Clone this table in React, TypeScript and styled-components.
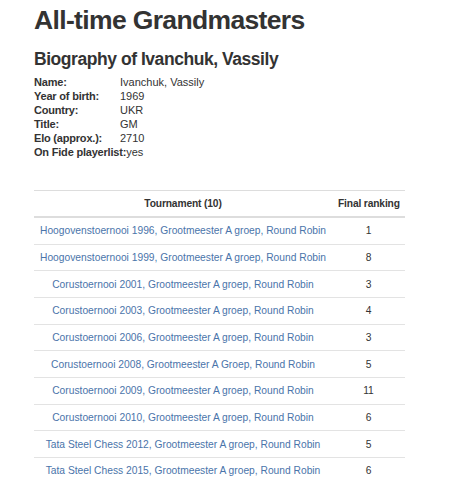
import React from 'react';
import styled, {createGlobalStyle} from 'styled-components';

const GlobalStyle = createGlobalStyle`
  body {
    margin: 0;
    background: #ffffff;
    font-family: 'Liberation Sans', Arial, sans-serif;
    color: #333333;
  }
`;

const Page = styled.div`
  padding: 4px 52px 0 34px;
`;

const Title = styled.h1`
  margin: 0;
  font-size: 26.5px;
  font-weight: bold;
  line-height: 32px;
  color: #333333;
  letter-spacing: -0.65px;
`;

const SubTitle = styled.h2`
  margin: 12px 0 0 0;
  font-size: 17.5px;
  font-weight: bold;
  line-height: 22px;
  color: #333333;
  letter-spacing: -0.45px;
`;

const InfoList = styled.div`
  margin-top: 5px;
  font-size: 11px;
  line-height: 14px;
`;

const InfoRow = styled.div`
  display: flex;
`;

const InfoLabel = styled.div`
  min-width: 86px;
  font-weight: bold;
  white-space: nowrap;
  letter-spacing: -0.2px;
`;

const InfoValue = styled.div``;

const Table = styled.table`
  width: 371px;
  margin-top: 31px;
  border-collapse: collapse;
  table-layout: fixed;
  font-size: 10.25px;
`;

const HeadCell = styled.th<{narrow?: boolean}>`
  border-top: 1px solid #dddddd;
  border-bottom: 2px solid #dddddd;
  padding: 0 6px;
  height: 25px;
  font-weight: bold;
  text-align: center;
  white-space: nowrap;
  letter-spacing: -0.15px;
  width: ${props => (props.narrow ? '61px' : 'auto')};
`;

const Cell = styled.td`
  border-top: 1px solid #e3e3e3;
  padding: 0 6px;
  height: 25.67px;
  text-align: center;
  white-space: nowrap;
`;

const Link = styled.a`
  color: #4a74aa;
  text-decoration: none;
`;

const info: [string, string][] = [
  ['Name:', 'Ivanchuk, Vassily'],
  ['Year of birth:', '1969'],
  ['Country:', 'UKR'],
  ['Title:', 'GM'],
  ['Elo (approx.):', '2710'],
  ['On Fide playerlist:', 'yes'],
];

const tournaments: [string, number][] = [
  ['Hoogovenstoernooi 1996, Grootmeester A groep, Round Robin', 1],
  ['Hoogovenstoernooi 1999, Grootmeester A groep, Round Robin', 8],
  ['Corustoernooi 2001, Grootmeester A groep, Round Robin', 3],
  ['Corustoernooi 2003, Grootmeester A groep, Round Robin', 4],
  ['Corustoernooi 2006, Grootmeester A groep, Round Robin', 3],
  ['Corustoernooi 2008, Grootmeester A Groep, Round Robin', 5],
  ['Corustoernooi 2009, Grootmeester A groep, Round Robin', 11],
  ['Corustoernooi 2010, Grootmeester A groep, Round Robin', 6],
  ['Tata Steel Chess 2012, Grootmeester A groep, Round Robin', 5],
  ['Tata Steel Chess 2015, Grootmeester A groep, Round Robin', 6],
];

export default function App() {
  return (
    <Page>
      <GlobalStyle />
      <Title>All-time Grandmasters</Title>
      <SubTitle>Biography of Ivanchuk, Vassily</SubTitle>
      <InfoList>
        {info.map(([label, value]) => (
          <InfoRow key={label}>
            <InfoLabel>{label}</InfoLabel>
            <InfoValue>{value}</InfoValue>
          </InfoRow>
        ))}
      </InfoList>
      <Table>
        <thead>
          <tr>
            <HeadCell>Tournament ({tournaments.length})</HeadCell>
            <HeadCell narrow>Final ranking</HeadCell>
          </tr>
        </thead>
        <tbody>
          {tournaments.map(([name, rank]) => (
            <tr key={name}>
              <Cell>
                <Link href="#">{name}</Link>
              </Cell>
              <Cell>{rank}</Cell>
            </tr>
          ))}
        </tbody>
      </Table>
    </Page>
  );
}
